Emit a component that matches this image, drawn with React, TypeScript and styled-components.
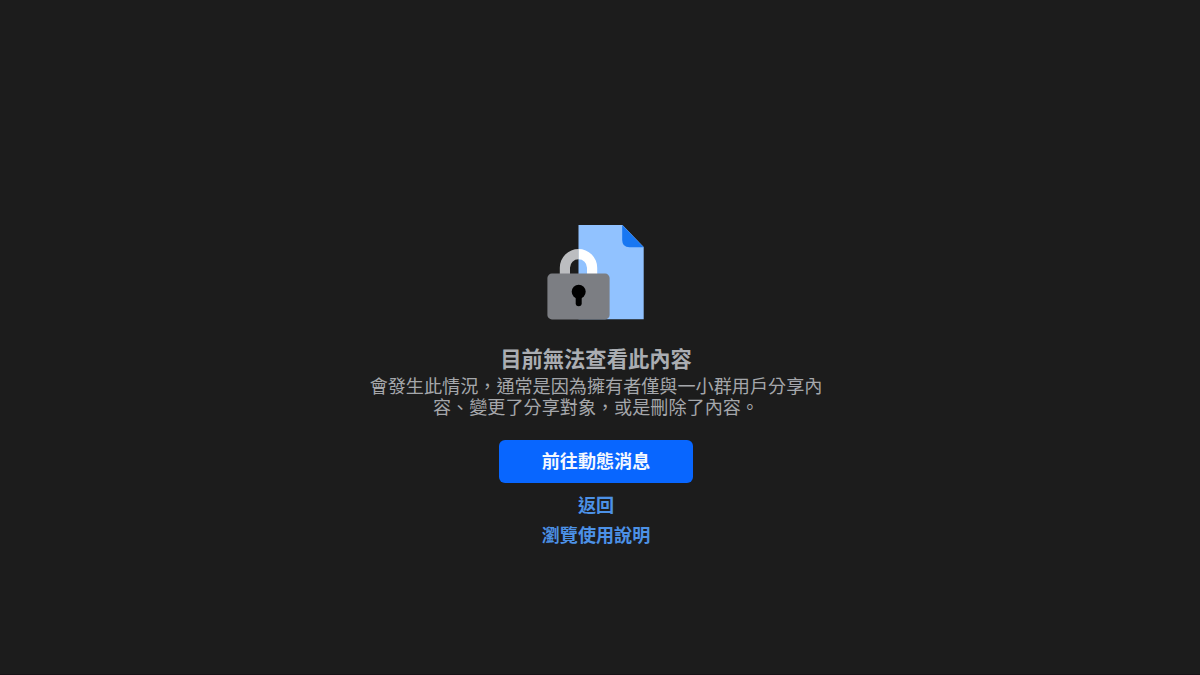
import React from 'react';
import styled, { createGlobalStyle } from 'styled-components';

const GlobalStyle = createGlobalStyle`
  body {
    margin: 0;
    background: #1c1c1c;
    font-family: 'Noto Sans CJK TC', 'Noto Sans', sans-serif;
  }
`;

const Page = styled.main`
  box-sizing: border-box;
  height: 675px;
  padding: 225px 8px 0 0;
  border-bottom: 1px solid #171216;
  display: flex;
  flex-direction: column;
  align-items: center;
  overflow: hidden;
`;

const Illustration = styled.svg`
  width: 98px;
  height: 95px;
  flex: none;
`;

const Title = styled.h1`
  margin: 24px 0 0;
  font-size: 21.3px;
  line-height: 27px;
  font-weight: 700;
  color: #aaadb2;
`;

const Description = styled.p`
  margin: 4px 0 0;
  width: 456px;
  font-size: 18.13px;
  line-height: 21px;
  color: #a5a7ab;
  text-align: center;
`;

const PrimaryButton = styled.button`
  margin: 23px 0 0;
  padding: 0 0 2px;
  width: 194px;
  height: 43px;
  border: 0;
  border-radius: 6px;
  background: #0866ff;
  color: #f4f8ff;
  font: 700 18.1px/41px 'Noto Sans CJK TC', sans-serif;
  cursor: pointer;
`;

const Links = styled.nav`
  margin-top: 6px;
  display: flex;
  flex-direction: column;
  align-items: center;
`;

const TextLink = styled.a`
  font-size: 18.1px;
  line-height: 30px;
  font-weight: 700;
  color: #4c91e6;
  text-decoration: none;
`;

function LockedDocument() {
  return (
    <Illustration viewBox="0 0 98 95" aria-hidden="true">
      <path d="M31.5 0H75.5L96.7 22V94.3H31.5Z" fill="#91c2ff" />
      <path d="M75.2 0L96.7 22.3H82.5Q75.2 22.3 75.2 15Z" fill="#1877f2" />
      <path d="M31.5 24A18.7 18.7 0 0 0 12.8 42.7V49H23V42.7A8.5 8.5 0 0 1 31.5 34.2Z" fill="#bcbdc0" />
      <path d="M31.5 24A18.7 18.7 0 0 1 50.2 42.7V49H40V42.7A8.5 8.5 0 0 0 31.5 34.2Z" fill="#fff" />
      <rect x="0.4" y="48.6" width="62.2" height="45.8" rx="4.5" fill="#7c7e83" />
      <circle cx="31.7" cy="66.8" r="7" fill="#000" />
      <path d="M31.7 68V78.3" stroke="#000" strokeWidth="6" strokeLinecap="round" />
    </Illustration>
  );
}

export default function App() {
  return (
    <>
      <GlobalStyle />
      <Page>
        <LockedDocument />
        <Title>目前無法查看此內容</Title>
        <Description>
          會發生此情況，通常是因為擁有者僅與一小群用戶分享內
          <br />
          容、變更了分享對象，或是刪除了內容。
        </Description>
        <PrimaryButton type="button">前往動態消息</PrimaryButton>
        <Links>
          <TextLink href="#">返回</TextLink>
          <TextLink href="#">瀏覽使用說明</TextLink>
        </Links>
      </Page>
    </>
  );
}
